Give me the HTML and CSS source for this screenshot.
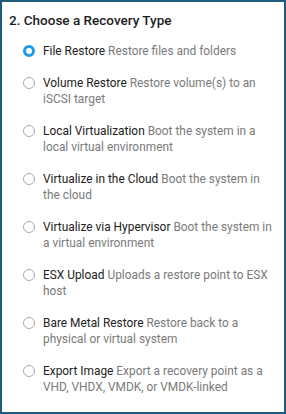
FILE: index.html
```html
<!DOCTYPE html>
<html>
<head>
<meta charset="utf-8">
<link rel="stylesheet" href="styles.css">
</head>
<body>
<div class="panel">
  <h2 class="title">2. Choose a Recovery Type</h2>
  <ul class="options">
    <li class="option selected"><span class="radio"></span><p class="text"><span class="label">File Restore</span> Restore files and folders</p></li>
    <li class="option"><span class="radio"></span><p class="text"><span class="label">Volume Restore</span> Restore volume(s) to an iSCSI target</p></li>
    <li class="option"><span class="radio"></span><p class="text"><span class="label">Local Virtualization</span> Boot the system in a local virtual environment</p></li>
    <li class="option"><span class="radio"></span><p class="text"><span class="label">Virtualize in the Cloud</span> Boot the system in the cloud</p></li>
    <li class="option"><span class="radio"></span><p class="text"><span class="label">Virtualize via Hypervisor</span> Boot the system in a virtual environment</p></li>
    <li class="option"><span class="radio"></span><p class="text"><span class="label">ESX Upload</span> Uploads a restore point to ESX host</p></li>
    <li class="option"><span class="radio"></span><p class="text"><span class="label">Bare Metal Restore</span> Restore back to a physical or virtual system</p></li>
    <li class="option"><span class="radio"></span><p class="text"><span class="label">Export Image</span> Export a recovery point as a VHD, VHDX, VMDK, or VMDK-linked</p></li>
  </ul>
</div>
</body>
</html>
```
FILE: styles.css
```css
html, body {
  margin: 0;
  padding: 0;
  background: #fff;
}
.panel {
  box-sizing: border-box;
  width: 286px;
  height: 414px;
  border: 2px solid #1f5b7a;
  padding: 10px 6px 0 7px;
  font-family: Roboto, "Liberation Sans", sans-serif;
  overflow: hidden;
}
.title {
  margin: 0;
  font-size: 13.5px;
  font-weight: 500;
  color: #1d1d1d;
  line-height: 16px;
}
.options {
  list-style: none;
  margin: 15px 0 0 0;
  padding: 0 0 0 14px;
  display: flex;
  flex-direction: column;
  gap: 16px;
}
.option {
  display: flex;
  align-items: flex-start;
  gap: 8px;
}
.radio {
  flex: none;
  box-sizing: border-box;
  width: 12px;
  height: 12px;
  margin-top: 2px;
  border-radius: 50%;
  border: 1px solid #a8a8a8;
}
.selected .radio {
  border: 3px solid #1e9be2;
}
.text {
  margin: 0;
  font-size: 11.9px;
  line-height: 16px;
  color: #7a7a7a;
}
.label {
  color: #222;
}
```
